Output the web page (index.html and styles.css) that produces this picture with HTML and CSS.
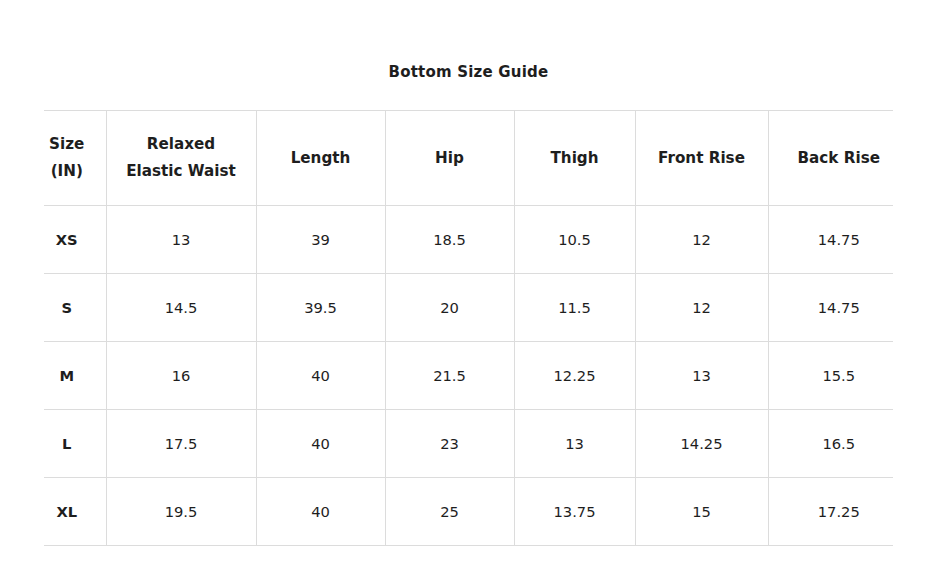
FILE: index.html
```html
<!DOCTYPE html>
<html>
<head>
<meta charset="utf-8">
<link rel="stylesheet" href="styles.css">
</head>
<body>
<div class="guide">
  <h2 class="title">Bottom Size Guide</h2>
  <table class="sizes">
    <colgroup>
      <col class="c1"><col class="c2"><col class="c3"><col class="c4"><col class="c5"><col class="c6"><col class="c7">
    </colgroup>
    <thead>
      <tr>
        <th>Size<br>(IN)</th>
        <th>Relaxed<br>Elastic Waist</th>
        <th>Length</th>
        <th>Hip</th>
        <th>Thigh</th>
        <th>Front Rise</th>
        <th>Back Rise</th>
      </tr>
    </thead>
    <tbody>
      <tr><th>XS</th><td>13</td><td>39</td><td>18.5</td><td>10.5</td><td>12</td><td>14.75</td></tr>
      <tr><th>S</th><td>14.5</td><td>39.5</td><td>20</td><td>11.5</td><td>12</td><td>14.75</td></tr>
      <tr><th>M</th><td>16</td><td>40</td><td>21.5</td><td>12.25</td><td>13</td><td>15.5</td></tr>
      <tr><th>L</th><td>17.5</td><td>40</td><td>23</td><td>13</td><td>14.25</td><td>16.5</td></tr>
      <tr><th>XL</th><td>19.5</td><td>40</td><td>25</td><td>13.75</td><td>15</td><td>17.25</td></tr>
    </tbody>
  </table>
</div>
</body>
</html>
```
FILE: styles.css
```css
html, body {
  margin: 0;
  padding: 0;
  background: #fff;
}
body {
  font-family: "DejaVu Sans", "Open Sans", sans-serif;
  color: #1e1e1e;
}
.guide {
  width: 849px;
  margin-left: 44px;
  padding-top: 61px;
}
.title {
  margin: 0 0 27px 0;
  text-align: center;
  font-size: 15px;
  line-height: 22px;
  font-weight: bold;
  letter-spacing: 0.2px;
}
.sizes {
  width: 849px;
  border-collapse: collapse;
  table-layout: fixed;
  font-size: 14.7px;
}
.c1 { width: 62px; }
.c2 { width: 150px; }
.c3 { width: 129px; }
.c4 { width: 129px; }
.c5 { width: 121px; }
.c6 { width: 133px; }
.c7 { width: 125px; }
.sizes th, .sizes td {
  border-top: 1px solid #dcdcdc;
  border-bottom: 1px solid #dcdcdc;
  border-right: 1px solid #dcdcdc;
  text-align: center;
  padding: 0;
  line-height: 27px;
}
.sizes th:first-child {
  padding-right: 16px;
}
.sizes th:last-child, .sizes td:last-child {
  border-right: none;
  padding-left: 16px;
}
.sizes thead th {
  height: 94px;
  font-weight: bold;
  font-size: 15.2px;
}
.sizes tbody th, .sizes tbody td {
  height: 67px;
  font-weight: normal;
}
.sizes tbody th {
  font-weight: bold;
}
```
